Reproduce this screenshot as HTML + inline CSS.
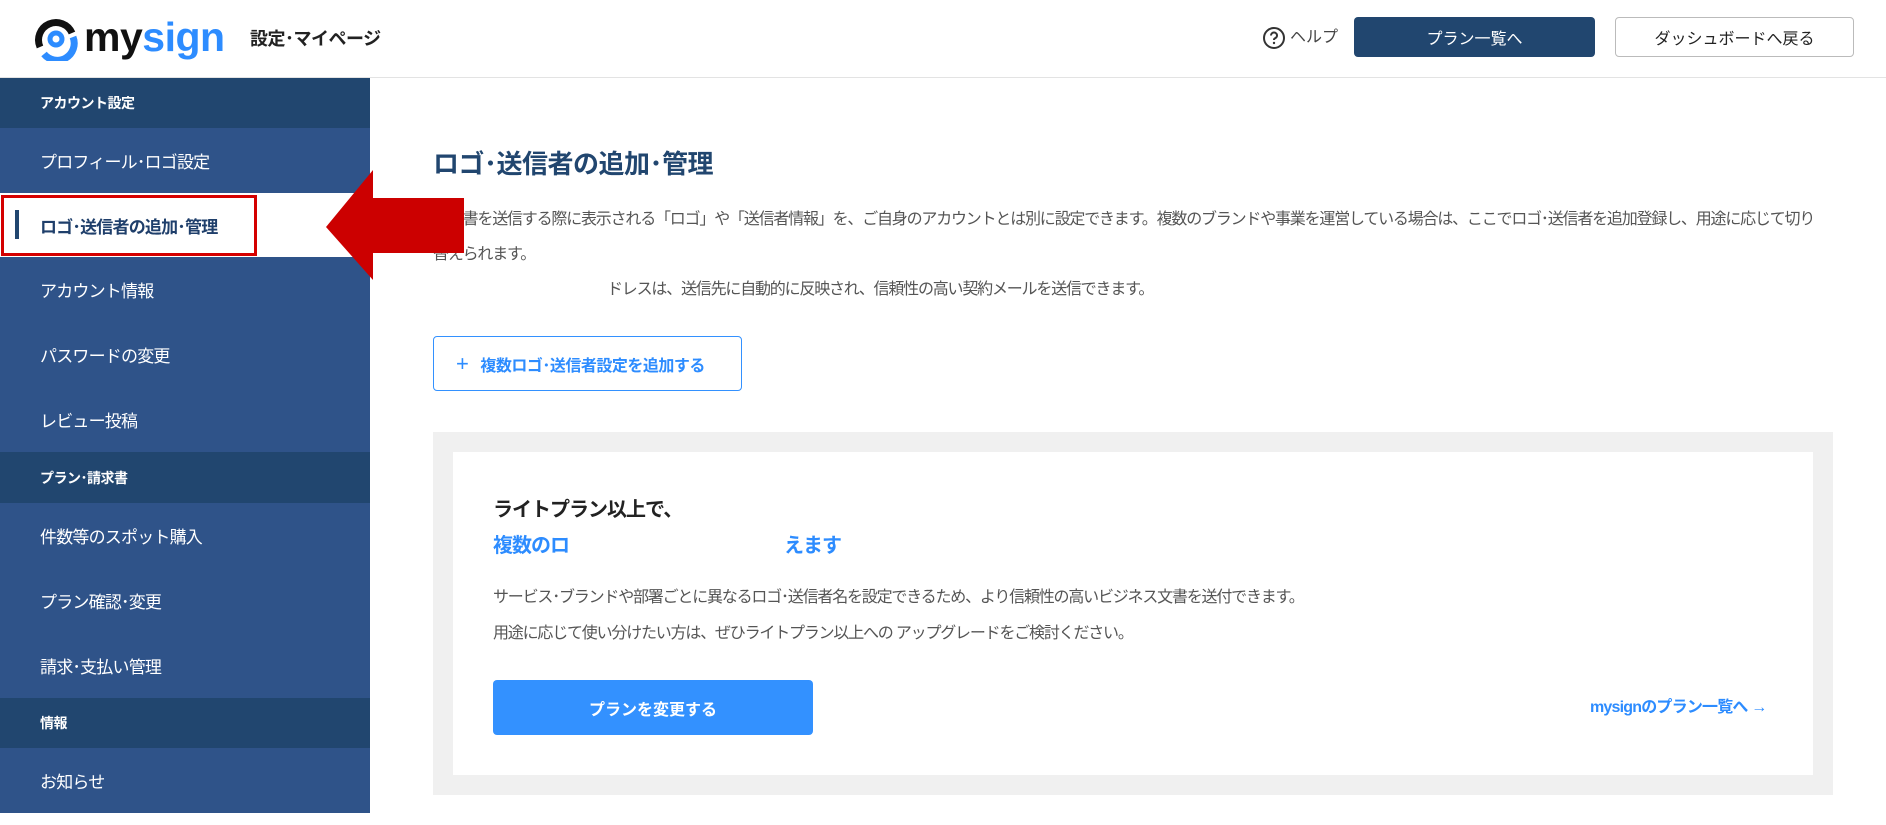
<!DOCTYPE html>
<html><head><meta charset="utf-8"><style>
*{margin:0;padding:0;box-sizing:border-box}
body{width:1886px;height:825px;overflow:hidden;background:#fff;font-family:"Liberation Sans","Noto Sans CJK JP",sans-serif;position:relative}
.abs{position:absolute;white-space:nowrap}
.hdr{position:absolute;left:0;top:0;width:1886px;height:78px;border-bottom:1px solid #e3e3e3}
.side{position:absolute;left:0;top:78px;width:370px;height:735px;background:#2f5389}
.sh{position:absolute;left:0;width:370px;background:#21466f;color:#fff;font-weight:bold;font-size:14px;padding-left:40px;display:flex;align-items:center;letter-spacing:-0.5px}
.si{position:absolute;left:0;width:370px;color:#fff;font-size:17px;padding-left:40px;display:flex;align-items:center;letter-spacing:-0.8px}
.p{color:#555;font-size:16px;letter-spacing:-1.2px}
</style></head><body>
<div class="hdr"></div>
<svg class="abs" style="left:34px;top:17px" width="44" height="44" viewBox="0 0 44 44">
<path d="M6 30 A17 17 0 1 1 38 16" fill="none" stroke="#111" stroke-width="7" stroke-linecap="butt"/>
<path d="M39 20 A17 17 0 0 1 10 37" fill="none" stroke="#2d8cff" stroke-width="7"/>
<circle cx="22" cy="22" r="6" fill="none" stroke="#2d8cff" stroke-width="5"/>
</svg>
<div class="abs" style="left:84px;top:13px;font-size:41px;font-weight:bold;letter-spacing:-0.5px;line-height:48px"><span style="color:#111">my</span><span style="color:#2d8cff">sign</span></div>
<div class="abs" style="left:250px;top:26px;font-size:18px;font-weight:bold;color:#222;line-height:26px;letter-spacing:-0.5px">設定･マイページ</div>
<svg class="abs" style="left:1262px;top:26px" width="24" height="24" viewBox="0 0 24 24"><circle cx="12" cy="12" r="10" fill="none" stroke="#333" stroke-width="2"/><path d="M9 9.5a3 3 0 1 1 4 2.8c-.8.4-1 .9-1 1.7" fill="none" stroke="#333" stroke-width="2"/><circle cx="12" cy="17" r="1.2" fill="#333"/></svg>
<div class="abs" style="left:1290px;top:26px;font-size:16px;color:#444;line-height:24px">ヘルプ</div>
<div class="abs" style="left:1354px;top:17px;width:241px;height:40px;background:#21466f;border-radius:4px;color:#fff;font-size:16px;display:flex;align-items:center;justify-content:center">プラン一覧へ</div>
<div class="abs" style="left:1615px;top:17px;width:239px;height:40px;border:1px solid #bbb;border-radius:4px;color:#222;font-size:16px;display:flex;align-items:center;justify-content:center">ダッシュボードへ戻る</div>

<div class="side"></div>
<div class="sh" style="top:78px;height:50px">アカウント設定</div>
<div class="si" style="top:128px;height:65px">プロフィール･ロゴ設定</div>
<div class="si" style="top:193px;height:64px;background:#fff;color:#1f3f6b;font-weight:bold">ロゴ･送信者の追加･管理</div>
<div class="abs" style="left:15px;top:210px;width:4px;height:29px;background:#21466f"></div>
<div class="abs" style="left:1px;top:195px;width:256px;height:61px;border:3px solid #d40000"></div>
<div class="si" style="top:257px;height:65px">アカウント情報</div>
<div class="si" style="top:322px;height:65px">パスワードの変更</div>
<div class="si" style="top:387px;height:65px">レビュー投稿</div>
<div class="sh" style="top:452px;height:51px">プラン･請求書</div>
<div class="si" style="top:503px;height:65px">件数等のスポット購入</div>
<div class="si" style="top:568px;height:65px">プラン確認･変更</div>
<div class="si" style="top:633px;height:65px">請求･支払い管理</div>
<div class="sh" style="top:698px;height:50px">情報</div>
<div class="si" style="top:748px;height:65px">お知らせ</div>

<div class="abs" style="left:433px;top:145px;font-size:26px;font-weight:bold;color:#21466f;line-height:38px;letter-spacing:-0.5px">ロゴ･送信者の追加･管理</div>
<div class="abs p" style="left:433px;top:208px;line-height:24px">契約書を送信する際に表示される「ロゴ」や「送信者情報」を、ご自身のアカウントとは別に設定できます。複数のブランドや事業を運営している場合は、ここでロゴ･送信者を追加登録し、用途に応じて切り</div>
<div class="abs p" style="left:433px;top:243px;line-height:24px">替えられます。</div>
<div class="abs p" style="left:607px;top:278px;line-height:24px">ドレスは、送信先に自動的に反映され、信頼性の高い契約メールを送信できます。</div>
<svg class="abs" style="left:326px;top:168px" width="140" height="114" viewBox="0 0 140 114"><polygon points="0,59 47,2 47,30 138,30 138,85 47,85 47,112" fill="#cc0000"/></svg>

<div class="abs" style="left:433px;top:336px;width:309px;height:55px;border:1px solid #3391ff;border-radius:4px;color:#2d8cff;font-size:16px;font-weight:bold;display:flex;align-items:center;padding-left:22px;letter-spacing:-0.5px"><span style="font-weight:normal;font-size:22px;margin-right:12px">+</span>複数ロゴ･送信者設定を追加する</div>

<div class="abs" style="left:433px;top:432px;width:1400px;height:363px;background:#f0f0f0"></div>
<div class="abs" style="left:453px;top:452px;width:1360px;height:323px;background:#fff"></div>
<div class="abs" style="left:493px;top:496px;font-size:20px;font-weight:bold;color:#222;line-height:28px;letter-spacing:-1px">ライトプラン以上で、</div>
<div class="abs" style="left:493px;top:532px;font-size:20px;font-weight:bold;color:#2d8cff;line-height:28px;letter-spacing:-1px">複数のロ</div>
<div class="abs" style="left:784px;top:532px;font-size:20px;font-weight:bold;color:#2d8cff;line-height:28px;letter-spacing:-1px">えます</div>
<div class="abs p" style="left:493px;top:586px;line-height:24px">サービス･ブランドや部署ごとに異なるロゴ･送信者名を設定できるため、より信頼性の高いビジネス文書を送付できます。</div>
<div class="abs p" style="left:493px;top:622px;line-height:24px">用途に応じて使い分けたい方は、ぜひライトプラン以上への アップグレードをご検討ください。</div>
<div class="abs" style="left:493px;top:680px;width:320px;height:55px;background:#3391ff;border-radius:4px;color:#fff;font-size:16px;font-weight:bold;display:flex;align-items:center;justify-content:center">プランを変更する</div>
<div class="abs" style="left:1590px;top:696px;font-size:16px;font-weight:bold;color:#2d8cff;line-height:24px;letter-spacing:-0.8px">mysignのプラン一覧へ →</div>
</body></html>
